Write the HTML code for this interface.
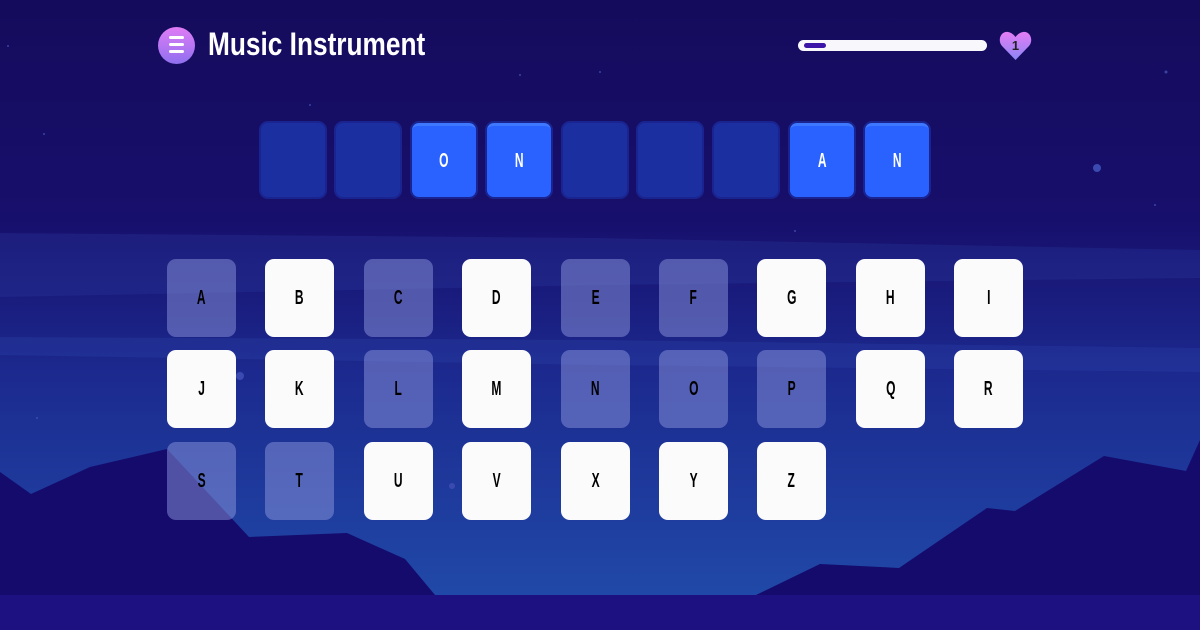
<!DOCTYPE html>
<html><head><meta charset="utf-8"><style>
html,body{margin:0;padding:0;width:1200px;height:630px;overflow:hidden}
body{position:relative;background:linear-gradient(#150b5c 0%,#170f6c 35%,#1c2a8f 60%,#2049a8 95%);font-family:"Liberation Sans",sans-serif;font-weight:bold}
svg.bg{position:absolute;left:0;top:0}
.t{position:absolute;display:flex;align-items:center;justify-content:center;font-size:20px;color:#000;border-radius:9px}
.t span{display:inline-block;transform:scaleX(.6)}
.k{width:69px;height:78px;background:#fbfbfb}
.k.u{background:rgba(140,150,220,.5)}
.s{width:64px;height:74px;top:123px;border-radius:7px;background:#1b2fa1;box-shadow:0 0 0 2px #1a2490;color:#fff;font-size:20px}
.s.f{background:#2962ff;border-top:3px solid #3d78ff;height:71px}
</style></head><body>
<svg class="bg" width="1200" height="630">
<polygon points="0,233 600,238 1200,250 1200,278 600,285 0,297" fill="#2a3aa0" opacity=".3"/>
<polygon points="0,337 600,340 1200,348 1200,372 600,365 0,355" fill="#2f44ad" opacity=".3"/>
<polygon points="0,472 31,494 90,467 167,449 249,537 347,533 405,559 435,595 0,595" fill="#140b6c"/>
<polygon points="756,595 820,564 899,568 987,508 1015,511 1104,456 1186,471 1200,440 1200,595" fill="#140b6c"/>
<rect x="0" y="595" width="1200" height="35" fill="#1d1080"/>
<g fill="#3a4ab0"><circle cx="1097" cy="168" r="4"/><circle cx="240" cy="376" r="4"/><circle cx="452" cy="486" r="3"/></g>
<g fill="#4a5bc0" opacity=".7"><circle cx="8" cy="46" r="1"/><circle cx="44" cy="134" r="1"/><circle cx="520" cy="75" r="1"/><circle cx="600" cy="72" r="1"/><circle cx="1166" cy="72" r="1.5"/><circle cx="1155" cy="205" r="1"/><circle cx="310" cy="105" r="1"/><circle cx="795" cy="231" r="1"/><circle cx="37" cy="418" r="1"/></g>
</svg>
<div style="position:absolute;left:158px;top:27px;width:37px;height:37px;border-radius:50%;background:linear-gradient(#e07cf5,#8f70f0)"></div>
<div style="position:absolute;left:169px;top:36px;width:15px;height:3px;background:#fff;border-radius:2px;box-shadow:0 7px 0 #fff,0 14px 0 #fff"></div>
<div style="position:absolute;left:208px;top:26px;color:#fff;font-size:32px;transform:scaleX(.82);transform-origin:left top;white-space:nowrap">Music Instrument</div>
<div style="position:absolute;left:798px;top:40px;width:189px;height:11px;border-radius:6px;background:#f8f8fc"></div>
<div style="position:absolute;left:804px;top:43px;width:22px;height:5px;border-radius:3px;background:#3b14a8"></div>
<svg style="position:absolute;left:999px;top:30px" width="33" height="31" viewBox="0 0 33 31"><defs><linearGradient id="h" x1="0" y1="0" x2="0" y2="1"><stop offset="0" stop-color="#e57cf5"/><stop offset="1" stop-color="#8a86f5"/></linearGradient></defs><path d="M16.5 30 L3 16 C-2 10 2 1 9 2 C12.5 2.5 15 5 16.5 7 C18 5 20.5 2.5 24 2 C31 1 35 10 30 16 Z" fill="url(#h)"/><text x="16.5" y="20" font-size="13" text-anchor="middle" fill="#222" font-family="Liberation Sans,sans-serif" font-weight="bold">1</text></svg>
<div class="t s" style="left:261px"></div>
<div class="t s" style="left:336px"></div>
<div class="t s f" style="left:412px"><span>O</span></div>
<div class="t s f" style="left:487px"><span>N</span></div>
<div class="t s" style="left:563px"></div>
<div class="t s" style="left:638px"></div>
<div class="t s" style="left:714px"></div>
<div class="t s f" style="left:790px"><span>A</span></div>
<div class="t s f" style="left:865px"><span>N</span></div>

<div class="t k u" style="left:167px;top:259px"><span>A</span></div>
<div class="t k" style="left:265px;top:259px"><span>B</span></div>
<div class="t k u" style="left:364px;top:259px"><span>C</span></div>
<div class="t k" style="left:462px;top:259px"><span>D</span></div>
<div class="t k u" style="left:561px;top:259px"><span>E</span></div>
<div class="t k u" style="left:659px;top:259px"><span>F</span></div>
<div class="t k" style="left:757px;top:259px"><span>G</span></div>
<div class="t k" style="left:856px;top:259px"><span>H</span></div>
<div class="t k" style="left:954px;top:259px"><span>I</span></div>

<div class="t k" style="left:167px;top:350px"><span>J</span></div>
<div class="t k" style="left:265px;top:350px"><span>K</span></div>
<div class="t k u" style="left:364px;top:350px"><span>L</span></div>
<div class="t k" style="left:462px;top:350px"><span>M</span></div>
<div class="t k u" style="left:561px;top:350px"><span>N</span></div>
<div class="t k u" style="left:659px;top:350px"><span>O</span></div>
<div class="t k u" style="left:757px;top:350px"><span>P</span></div>
<div class="t k" style="left:856px;top:350px"><span>Q</span></div>
<div class="t k" style="left:954px;top:350px"><span>R</span></div>

<div class="t k u" style="left:167px;top:442px"><span>S</span></div>
<div class="t k u" style="left:265px;top:442px"><span>T</span></div>
<div class="t k" style="left:364px;top:442px"><span>U</span></div>
<div class="t k" style="left:462px;top:442px"><span>V</span></div>
<div class="t k" style="left:561px;top:442px"><span>X</span></div>
<div class="t k" style="left:659px;top:442px"><span>Y</span></div>
<div class="t k" style="left:757px;top:442px"><span>Z</span></div>
</body></html>
